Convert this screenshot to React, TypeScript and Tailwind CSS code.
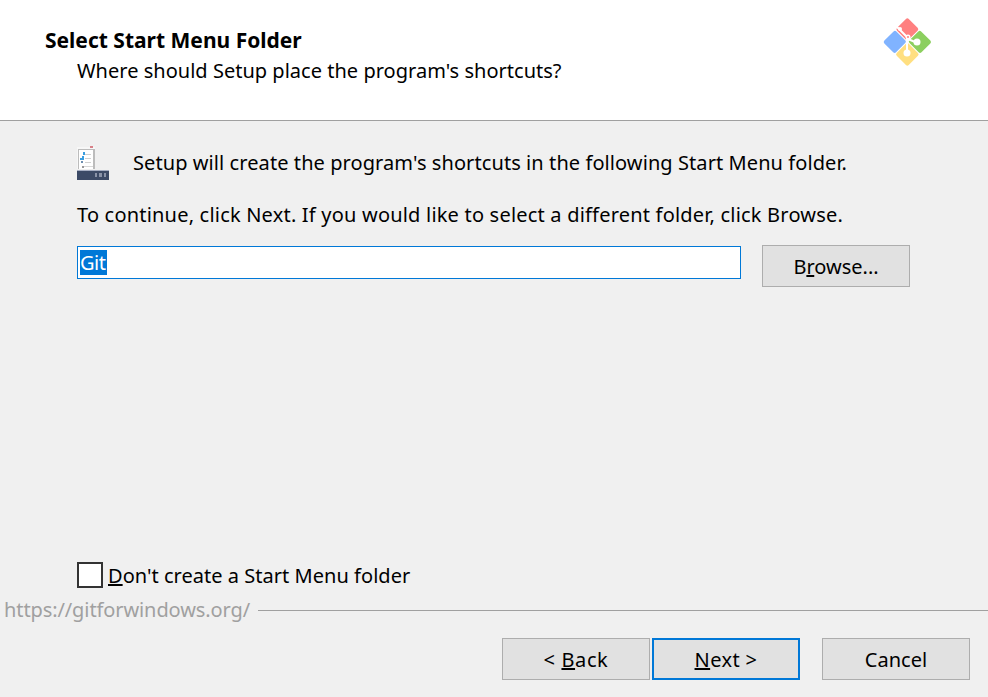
import React from "react";

const GitLogo: React.FC = () => (
	<svg width="50" height="50" viewBox="0 0 50 50" className="mt-[17px] mr-[56px] shrink-0">
		<g transform="rotate(45 25 25)">
			<rect x="8" y="7.5" width="16.5" height="16.5" rx="2" fill="#ff8080" />
			<rect x="25.5" y="7.5" width="17" height="16.5" rx="2" fill="#8ccf5f" />
			<rect x="25.5" y="25" width="17" height="17" rx="2" fill="#ffdf80" />
			<rect x="8" y="25" width="16.5" height="17" rx="2" fill="#80b3ff" />
		</g>
		<path d="M14 9 L25 20 L25 33 M26 22 L33 25" stroke="#fff" strokeWidth="2" fill="none" />
		<circle cx="25" cy="36" r="3.5" fill="#fff" />
		<circle cx="35" cy="25" r="3.5" fill="#fff" />
		<circle cx="18" cy="12" r="2" fill="#fff" />
		<circle cx="26" cy="20" r="2.5" fill="#fff" />
		<circle cx="26" cy="20" r="1" fill="#ff8080" />
	</svg>
);

const ShortcutIcon: React.FC = () => (
	<svg width="32" height="34" viewBox="0 0 32 34" className="shrink-0">
		<rect x="0" y="1" width="18" height="22" fill="#f7f7f7" />
		<rect x="1" y="3" width="17" height="20" fill="#bcbcbc" />
		<rect x="2" y="4" width="14" height="19" fill="#fff" />
		<rect x="13" y="0" width="3" height="2" fill="#d88088" />
		<rect x="6" y="6" width="2" height="3" fill="#3a9ee0" />
		<rect x="5" y="10" width="2" height="2" fill="#3a9ee0" />
		<rect x="3" y="12" width="4" height="2" fill="#3a9ee0" />
		<rect x="4" y="15" width="2" height="2" fill="#6c8eb0" />
		<rect x="5" y="20" width="2" height="2" fill="#999" />
		<rect x="8" y="8" width="6" height="1" fill="#d0d0d0" />
		<rect x="8" y="12" width="6" height="1" fill="#d0d0d0" />
		<rect x="8" y="16" width="6" height="1" fill="#d0d0d0" />
		<rect x="7" y="20" width="4" height="1" fill="#d8d8d8" />
		<rect x="11" y="20" width="5" height="1" fill="#d8d8d8" />
		<rect x="0" y="24" width="32" height="10" fill="#3c4a66" />
		<rect x="0" y="24" width="32" height="1" fill="#a8b0c4" />
		<rect x="18" y="27" width="2" height="4" fill="#8a93a8" />
		<rect x="22" y="27" width="3" height="4" fill="#8a93a8" />
		<rect x="27" y="27" width="2" height="4" fill="#8a93a8" />
	</svg>
);

const WizardButton: React.FC<{ className?: string; children: React.ReactNode }> = ({ className, children }) => (
	<button
		type="button"
		className={`w-[148px] h-[42px] bg-[#e1e1e1] text-[20px] text-black flex items-center justify-center ${className}`}
	>
		{children}
	</button>
);

export default function App() {
	return (
		<div className="w-[988px] h-[697px] bg-[#f0f0f0] flex flex-col overflow-hidden text-black font-['Noto_Sans','Open_Sans',sans-serif]">
			<header className="h-[121px] shrink-0 bg-white border-b border-[#a0a0a0] flex justify-between">
				<div className="pl-[45px] pt-[25px]">
					<h1 className="text-[21px] leading-[30px] font-bold">Select Start Menu Folder</h1>
					<p className="pl-[32px] mt-[1px] text-[20px] leading-[30px] tracking-[0.02px]">Where should Setup place the program's shortcuts?</p>
				</div>
				<GitLogo />
			</header>

			<main className="flex-1 pl-[77px] pr-[78px] pt-[25px]">
				<div className="flex items-start gap-[24px]">
					<ShortcutIcon />
					<p className="text-[20px] leading-[30px] mt-[2px] tracking-[0.08px]">Setup will create the program's shortcuts in the following Start Menu folder.</p>
				</div>
				<p className="mt-[20px] text-[20px] leading-[30px] tracking-[0.2px]">To continue, click Next. If you would like to select a different folder, click Browse.</p>
				<div className="mt-[15px] flex items-start justify-between">
					<div className="mt-[1px] w-[664px] h-[33px] bg-white border border-[#0078d7] flex items-center pl-[2px] text-[20px]">
						<span className="bg-[#0078d7] text-white w-[27px] h-[25px] leading-[25px] tracking-[-0.5px]">Git</span>
					</div>
					<WizardButton className="border border-[#adadad]">
						<span className="relative top-px">
							B<u>r</u>owse...
						</span>
					</WizardButton>
				</div>
			</main>

			<label className="flex items-center pl-[77px] gap-[5px] text-[20px] leading-[26px]">
				<span className="w-[26px] h-[26px] bg-white border-2 border-[#333]" />
				<span className="relative top-px tracking-[0.03px]">
					<u>D</u>on't create a Start Menu folder
				</span>
			</label>

			<div className="mt-[9px] flex items-center pl-[4px] h-[26px]">
				<span className="text-[20px] text-[#a0a0a0] tracking-[-0.1px]">https://gitforwindows.org/</span>
				<div className="ml-[8px] flex-1 h-px bg-[#a0a0a0]" />
			</div>

			<footer className="mt-[15px] mb-[17px] pl-[502px] flex">
				<WizardButton className="border border-[#adadad]">
					<span className="tracking-[0.6px] relative top-px">
						&lt; <u>B</u>ack
					</span>
				</WizardButton>
				<WizardButton className="ml-[2px] border-2 border-[#0078d7]">
					<span className="tracking-[0.4px] relative top-px">
						<u>N</u>ext &gt;
					</span>
				</WizardButton>
				<WizardButton className="ml-[22px] border border-[#adadad]">
					<span className="relative top-px">Cancel</span>
				</WizardButton>
			</footer>
		</div>
	);
}
